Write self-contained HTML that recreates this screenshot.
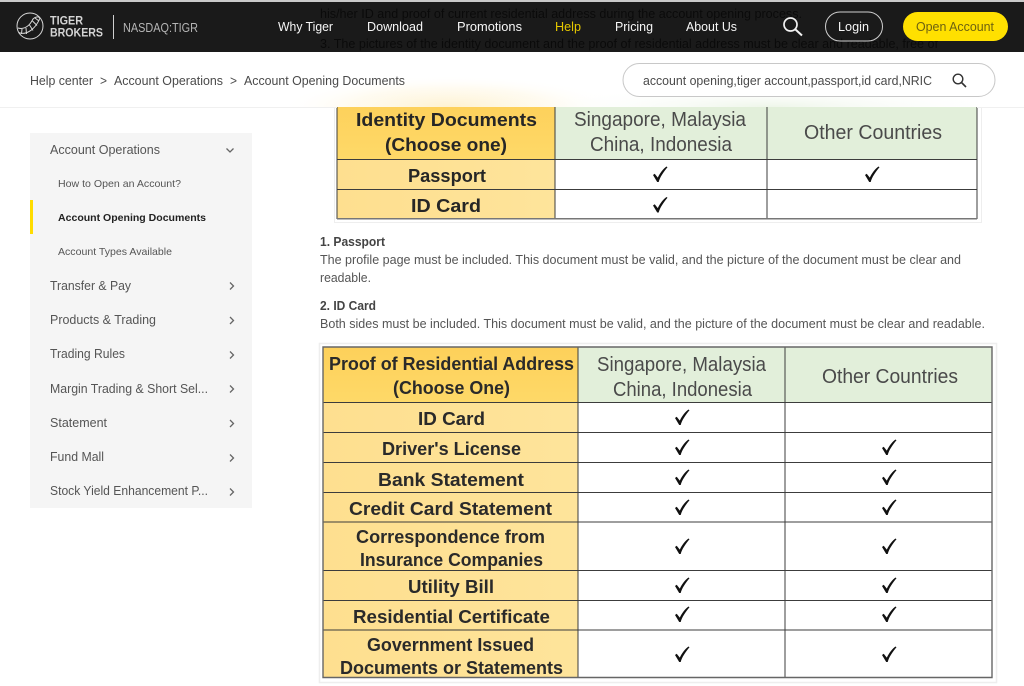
<!DOCTYPE html>
<html lang="en">
<head>
<meta charset="utf-8">
<title>Account Opening Documents</title>
<style>
html,body{margin:0;padding:0;background:#fff;width:1024px;height:686px;overflow:hidden}
svg{display:block;filter:blur(.35px)}
text{font-family:"Liberation Sans",sans-serif}
.os{font-size:13px;fill:#4a4a4a}
.nav{font-size:13px;fill:#f6f6f6}
.ghost{font-size:13px;fill:#000;opacity:.6}
.side{font-size:12.5px;fill:#555}
.sub{font-size:10.5px;fill:#555}
.body{font-size:12.5px;fill:#555}
.th{font-size:18.5px;font-weight:bold;fill:#262626}
.tg{font-size:20px;fill:#4a4a4a}
.tb{font-size:18.5px;font-weight:bold;fill:#2a2a2a}
.chev{fill:none;stroke:#666;stroke-width:1.3}
.grid{stroke:#3c3c3c;stroke-width:1;fill:none}
.ck{fill:#111}
</style>
</head>
<body>
<svg width="1024" height="686" viewBox="0 0 1024 686" xmlns="http://www.w3.org/2000/svg">
<defs>
<linearGradient id="hd" x1="0" y1="0" x2="0" y2="1"><stop offset="0" stop-color="#fdd05a"/><stop offset="1" stop-color="#fed968"/></linearGradient>
<linearGradient id="rw" x1="0" y1="0" x2="1" y2="0"><stop offset="0" stop-color="#fedf8f"/><stop offset="1" stop-color="#fee49b"/></linearGradient>
<radialGradient id="glow" cx=".5" cy=".5" r=".5"><stop offset="0" stop-color="#fdd66e" stop-opacity=".32"/><stop offset=".6" stop-color="#fde39a" stop-opacity=".14"/><stop offset="1" stop-color="#fff" stop-opacity="0"/></radialGradient>
<radialGradient id="glowg" cx=".5" cy=".5" r=".5"><stop offset="0" stop-color="#e2efda" stop-opacity=".6"/><stop offset="1" stop-color="#fff" stop-opacity="0"/></radialGradient>
<clipPath id="bar"><rect x="0" y="52" width="1024" height="55"/></clipPath>
</defs>

<rect width="1024" height="686" fill="#fff"/>

<!-- Sidebar -->
<rect x="30" y="133" width="222" height="375" fill="#f5f5f5"/>
<rect x="30" y="200" width="3" height="34" fill="#ffdc00"/>
<text class="side" x="50" y="154" textLength="110" lengthAdjust="spacingAndGlyphs">Account Operations</text>
<text class="sub" x="58" y="187" textLength="123" lengthAdjust="spacingAndGlyphs">How to Open an Account?</text>
<text class="sub" x="58" y="221" textLength="148" lengthAdjust="spacingAndGlyphs" style="font-weight:bold;fill:#222">Account Opening Documents</text>
<text class="sub" x="58" y="255" textLength="114" lengthAdjust="spacingAndGlyphs">Account Types Available</text>
<text class="side" x="50" y="290" textLength="81" lengthAdjust="spacingAndGlyphs">Transfer &amp; Pay</text>
<text class="side" x="50" y="324" textLength="106" lengthAdjust="spacingAndGlyphs">Products &amp; Trading</text>
<text class="side" x="50" y="358" textLength="75" lengthAdjust="spacingAndGlyphs">Trading Rules</text>
<text class="side" x="50" y="393" textLength="158" lengthAdjust="spacingAndGlyphs">Margin Trading &amp; Short Sel...</text>
<text class="side" x="50" y="427" textLength="57" lengthAdjust="spacingAndGlyphs">Statement</text>
<text class="side" x="50" y="461" textLength="54" lengthAdjust="spacingAndGlyphs">Fund Mall</text>
<text class="side" x="50" y="495" textLength="158" lengthAdjust="spacingAndGlyphs">Stock Yield Enhancement P...</text>
<path class="chev" d="M226.500 148.500l3.500 3.500 3.500-3.500"/>
<path class="chev" d="M230 282.500l3.500 3.500-3.500 3.500"/>
<path class="chev" d="M230 317l3.500 3.500-3.500 3.500"/>
<path class="chev" d="M230 351.500l3.500 3.500-3.500 3.500"/>
<path class="chev" d="M230 385.500l3.500 3.500-3.500 3.500"/>
<path class="chev" d="M230 420l3.500 3.500-3.500 3.500"/>
<path class="chev" d="M230 454.500l3.500 3.500-3.500 3.500"/>
<path class="chev" d="M230 488.500l3.500 3.500-3.500 3.500"/>

<!-- Table 1 -->
<rect x="334.500" y="100" width="647" height="122.500" fill="#fff" stroke="#eee"/>
<rect x="337" y="100" width="218" height="59" fill="url(#hd)"/>
<rect x="555" y="100" width="422" height="59" fill="#e2efda"/>
<rect x="337" y="159" width="218" height="59.500" fill="url(#rw)"/>
<path class="grid" d="M337 100V218.500H977V100M555 100V218.500M767 100V218.500M337 159.500H977M337 189.500H977"/>
<path d="M337 218.700H977" stroke="#777" stroke-width="1.500" fill="none"/>
<text class="th" x="356" y="126" textLength="181" lengthAdjust="spacingAndGlyphs">Identity Documents</text>
<text class="th" x="385" y="151" textLength="122" lengthAdjust="spacingAndGlyphs">(Choose one)</text>
<text class="tg" x="574" y="126" textLength="172" lengthAdjust="spacingAndGlyphs">Singapore, Malaysia</text>
<text class="tg" x="590" y="151" textLength="142" lengthAdjust="spacingAndGlyphs">China, Indonesia</text>
<text class="tg" x="804" y="139" textLength="138" lengthAdjust="spacingAndGlyphs">Other Countries</text>
<text class="th" x="408" y="182" textLength="78" lengthAdjust="spacingAndGlyphs">Passport</text>
<text class="th" x="411" y="212" textLength="70" lengthAdjust="spacingAndGlyphs">ID Card</text>
<path class="ck" transform="translate(660 174)" d="M-7 1L-5.300-.2L-2.200 3.600C0-1 3-5 6.500-7.500L7.500-6.800C3.500-2 0 3-1.300 8L-2.800 8Z"/>
<path class="ck" transform="translate(872 174)" d="M-7 1L-5.300-.2L-2.200 3.600C0-1 3-5 6.500-7.500L7.500-6.800C3.500-2 0 3-1.300 8L-2.800 8Z"/>
<path class="ck" transform="translate(660 204.500)" d="M-7 1L-5.300-.2L-2.200 3.600C0-1 3-5 6.500-7.500L7.500-6.800C3.500-2 0 3-1.300 8L-2.800 8Z"/>

<!-- Body copy -->
<text class="body" x="320" y="246" textLength="65" lengthAdjust="spacingAndGlyphs" style="font-weight:bold;fill:#444">1. Passport</text>
<text class="body" x="320" y="264" textLength="641" lengthAdjust="spacingAndGlyphs">The profile page must be included. This document must be valid, and the picture of the document must be clear and</text>
<text class="body" x="320" y="282" textLength="51" lengthAdjust="spacingAndGlyphs">readable.</text>
<text class="body" x="320" y="310" textLength="56" lengthAdjust="spacingAndGlyphs" style="font-weight:bold;fill:#444">2. ID Card</text>
<text class="body" x="320" y="328" textLength="665" lengthAdjust="spacingAndGlyphs">Both sides must be included. This document must be valid, and the picture of the document must be clear and readable.</text>

<!-- Table 2 -->
<rect x="319.500" y="343.500" width="677" height="339" fill="#fff" stroke="#eee" stroke-width="1.500"/>
<rect x="323" y="347" width="255" height="55.500" fill="url(#hd)"/>
<rect x="578" y="347" width="414" height="55.500" fill="#e2efda"/>
<rect x="323" y="402.500" width="255" height="275" fill="url(#rw)"/>
<path class="grid" d="M578 347V677.500M785 347V677.500M323 402.500H992M323 432.500H992M323 462.500H992M323 492.500H992M323 522H992M323 570.500H992M323 600.500H992M323 630H992"/>
<path d="M323 347H992V677.500H323Z" stroke="#666" stroke-width="1.400" fill="none"/>
<text class="tb" x="329" y="370" textLength="245" lengthAdjust="spacingAndGlyphs">Proof of Residential Address</text>
<text class="tb" x="393" y="394" textLength="117" lengthAdjust="spacingAndGlyphs">(Choose One)</text>
<text class="tg" x="597" y="371" textLength="169" lengthAdjust="spacingAndGlyphs">Singapore, Malaysia</text>
<text class="tg" x="613" y="396" textLength="139" lengthAdjust="spacingAndGlyphs">China, Indonesia</text>
<text class="tg" x="822" y="383" textLength="136" lengthAdjust="spacingAndGlyphs">Other Countries</text>
<text class="tb" x="418" y="425" textLength="67" lengthAdjust="spacingAndGlyphs">ID Card</text>
<text class="tb" x="382" y="455" textLength="139" lengthAdjust="spacingAndGlyphs">Driver's License</text>
<text class="tb" x="378" y="486" textLength="146" lengthAdjust="spacingAndGlyphs">Bank Statement</text>
<text class="tb" x="349" y="515" textLength="203" lengthAdjust="spacingAndGlyphs">Credit Card Statement</text>
<text class="tb" x="356" y="543" textLength="189" lengthAdjust="spacingAndGlyphs">Correspondence from</text>
<text class="tb" x="360" y="566" textLength="183" lengthAdjust="spacingAndGlyphs">Insurance Companies</text>
<text class="tb" x="408" y="593" textLength="86" lengthAdjust="spacingAndGlyphs">Utility Bill</text>
<text class="tb" x="353" y="623" textLength="197" lengthAdjust="spacingAndGlyphs">Residential Certificate</text>
<text class="tb" x="367" y="651" textLength="167" lengthAdjust="spacingAndGlyphs">Government Issued</text>
<text class="tb" x="340" y="674" textLength="223" lengthAdjust="spacingAndGlyphs">Documents or Statements</text>
<g class="ck">
<path transform="translate(682 417)" d="M-7 1L-5.300-.2L-2.200 3.600C0-1 3-5 6.500-7.500L7.500-6.800C3.500-2 0 3-1.300 8L-2.800 8Z"/>
<path transform="translate(682 447)" d="M-7 1L-5.300-.2L-2.200 3.600C0-1 3-5 6.500-7.500L7.500-6.800C3.500-2 0 3-1.300 8L-2.800 8Z"/>
<path transform="translate(682 477)" d="M-7 1L-5.300-.2L-2.200 3.600C0-1 3-5 6.500-7.500L7.500-6.800C3.500-2 0 3-1.300 8L-2.800 8Z"/>
<path transform="translate(682 507)" d="M-7 1L-5.300-.2L-2.200 3.600C0-1 3-5 6.500-7.500L7.500-6.800C3.500-2 0 3-1.300 8L-2.800 8Z"/>
<path transform="translate(682 546)" d="M-7 1L-5.300-.2L-2.200 3.600C0-1 3-5 6.500-7.500L7.500-6.800C3.500-2 0 3-1.300 8L-2.800 8Z"/>
<path transform="translate(682 585)" d="M-7 1L-5.300-.2L-2.200 3.600C0-1 3-5 6.500-7.500L7.500-6.800C3.500-2 0 3-1.300 8L-2.800 8Z"/>
<path transform="translate(682 614)" d="M-7 1L-5.300-.2L-2.200 3.600C0-1 3-5 6.500-7.500L7.500-6.800C3.500-2 0 3-1.300 8L-2.800 8Z"/>
<path transform="translate(682 654)" d="M-7 1L-5.300-.2L-2.200 3.600C0-1 3-5 6.500-7.500L7.500-6.800C3.500-2 0 3-1.300 8L-2.800 8Z"/>
<path transform="translate(889 447)" d="M-7 1L-5.300-.2L-2.200 3.600C0-1 3-5 6.500-7.500L7.500-6.800C3.500-2 0 3-1.300 8L-2.800 8Z"/>
<path transform="translate(889 477)" d="M-7 1L-5.300-.2L-2.200 3.600C0-1 3-5 6.500-7.500L7.500-6.800C3.500-2 0 3-1.300 8L-2.800 8Z"/>
<path transform="translate(889 507)" d="M-7 1L-5.300-.2L-2.200 3.600C0-1 3-5 6.500-7.500L7.500-6.800C3.500-2 0 3-1.300 8L-2.800 8Z"/>
<path transform="translate(889 546)" d="M-7 1L-5.300-.2L-2.200 3.600C0-1 3-5 6.500-7.500L7.500-6.800C3.500-2 0 3-1.300 8L-2.800 8Z"/>
<path transform="translate(889 585)" d="M-7 1L-5.300-.2L-2.200 3.600C0-1 3-5 6.500-7.500L7.500-6.800C3.500-2 0 3-1.300 8L-2.800 8Z"/>
<path transform="translate(889 614)" d="M-7 1L-5.300-.2L-2.200 3.600C0-1 3-5 6.500-7.500L7.500-6.800C3.500-2 0 3-1.300 8L-2.800 8Z"/>
<path transform="translate(889 654)" d="M-7 1L-5.300-.2L-2.200 3.600C0-1 3-5 6.500-7.500L7.500-6.800C3.500-2 0 3-1.300 8L-2.800 8Z"/>
</g>

<!-- Breadcrumb bar -->
<rect x="0" y="52" width="1024" height="55" fill="#fff"/>
<g clip-path="url(#bar)">
<ellipse cx="450" cy="107" rx="170" ry="32" fill="url(#glow)"/>
<ellipse cx="770" cy="107" rx="240" ry="22" fill="url(#glowg)"/>
</g>
<rect x="0" y="107" width="337" height="1" fill="#f0f0f0"/>
<rect x="977" y="107" width="47" height="1" fill="#f0f0f0"/>
<text class="os" x="30" y="85" textLength="63" lengthAdjust="spacingAndGlyphs">Help center</text>
<text class="os" x="100" y="85" textLength="7" lengthAdjust="spacingAndGlyphs">&gt;</text>
<text class="os" x="114" y="85" textLength="109" lengthAdjust="spacingAndGlyphs">Account Operations</text>
<text class="os" x="230" y="85" textLength="7" lengthAdjust="spacingAndGlyphs">&gt;</text>
<text class="os" x="244" y="85" textLength="161" lengthAdjust="spacingAndGlyphs">Account Opening Documents</text>
<rect x="623" y="63.500" width="372" height="33" rx="16.500" fill="#fff" stroke="#c8c8c8"/>
<text class="os" x="643" y="85" textLength="289" lengthAdjust="spacingAndGlyphs">account opening,tiger account,passport,id card,NRIC</text>
<circle cx="958" cy="79" r="4.800" fill="none" stroke="#333" stroke-width="1.400"/>
<path d="M961.500 82.500L966 87" stroke="#333" stroke-width="1.600" fill="none"/>

<!-- Header -->
<rect x="0" y="0" width="1024" height="2" fill="#c9c9c9"/>
<rect x="0" y="2" width="1024" height="50" fill="#1a1a1a"/>
<text class="ghost" x="320" y="18" textLength="482" lengthAdjust="spacingAndGlyphs">his/her ID and proof of current residential address during the account opening process.</text>
<text class="ghost" x="320" y="48" textLength="618" lengthAdjust="spacingAndGlyphs">3. The pictures of the identity document and the proof of residential address must be clear and readable, free of</text>

<circle cx="30" cy="26" r="13" fill="none" stroke="#d8d8d8" stroke-width="1"/>
<g fill="none" stroke="#d8d8d8" stroke-width="1">
<path d="M18.500 32.500C27 36 36 28 40 18"/>
<path d="M18 28C25 30 30 25 33 19C35 17 38 16 40 18"/>
<path d="M22 29L21.500 34M26 28L26.500 34M29.500 25L33 30.500M32.500 21L37 25.500M35 18L39 21"/>
</g>
<text x="50" y="24.500" textLength="33" lengthAdjust="spacingAndGlyphs" style="font-size:12px;font-weight:bold;fill:#d4d4d4">TIGER</text>
<text x="50" y="36.500" textLength="53" lengthAdjust="spacingAndGlyphs" style="font-size:12px;font-weight:bold;fill:#d4d4d4">BROKERS</text>
<rect x="113" y="15" width="1" height="24" fill="#cfcfcf"/>
<text x="123" y="32" textLength="75" lengthAdjust="spacingAndGlyphs" style="font-size:12.500px;fill:#b5b5b5">NASDAQ:TIGR</text>

<text class="nav" x="278" y="31" textLength="55" lengthAdjust="spacingAndGlyphs">Why Tiger</text>
<text class="nav" x="367" y="31" textLength="56" lengthAdjust="spacingAndGlyphs">Download</text>
<text class="nav" x="457" y="31" textLength="65" lengthAdjust="spacingAndGlyphs">Promotions</text>
<text class="nav" x="555" y="31" textLength="26" lengthAdjust="spacingAndGlyphs" style="fill:#e6c800">Help</text>
<text class="nav" x="615" y="31" textLength="38" lengthAdjust="spacingAndGlyphs">Pricing</text>
<text class="nav" x="686" y="31" textLength="51" lengthAdjust="spacingAndGlyphs">About Us</text>

<circle cx="790.500" cy="24.500" r="6.500" fill="none" stroke="#f2f2f2" stroke-width="1.700"/>
<path d="M795.500 29.500L802 35.500" stroke="#f2f2f2" stroke-width="2" fill="none"/>

<rect x="825.500" y="12" width="57" height="29" rx="14.500" fill="none" stroke="#cfcfcf"/>
<text class="nav" x="838" y="31" textLength="31" lengthAdjust="spacingAndGlyphs">Login</text>
<rect x="903" y="12" width="105" height="29" rx="14.500" fill="#ffe000"/>
<text x="916" y="31" textLength="78" lengthAdjust="spacingAndGlyphs" style="font-size:13px;fill:#6e6210">Open Account</text>
</svg>
</body>
</html>
